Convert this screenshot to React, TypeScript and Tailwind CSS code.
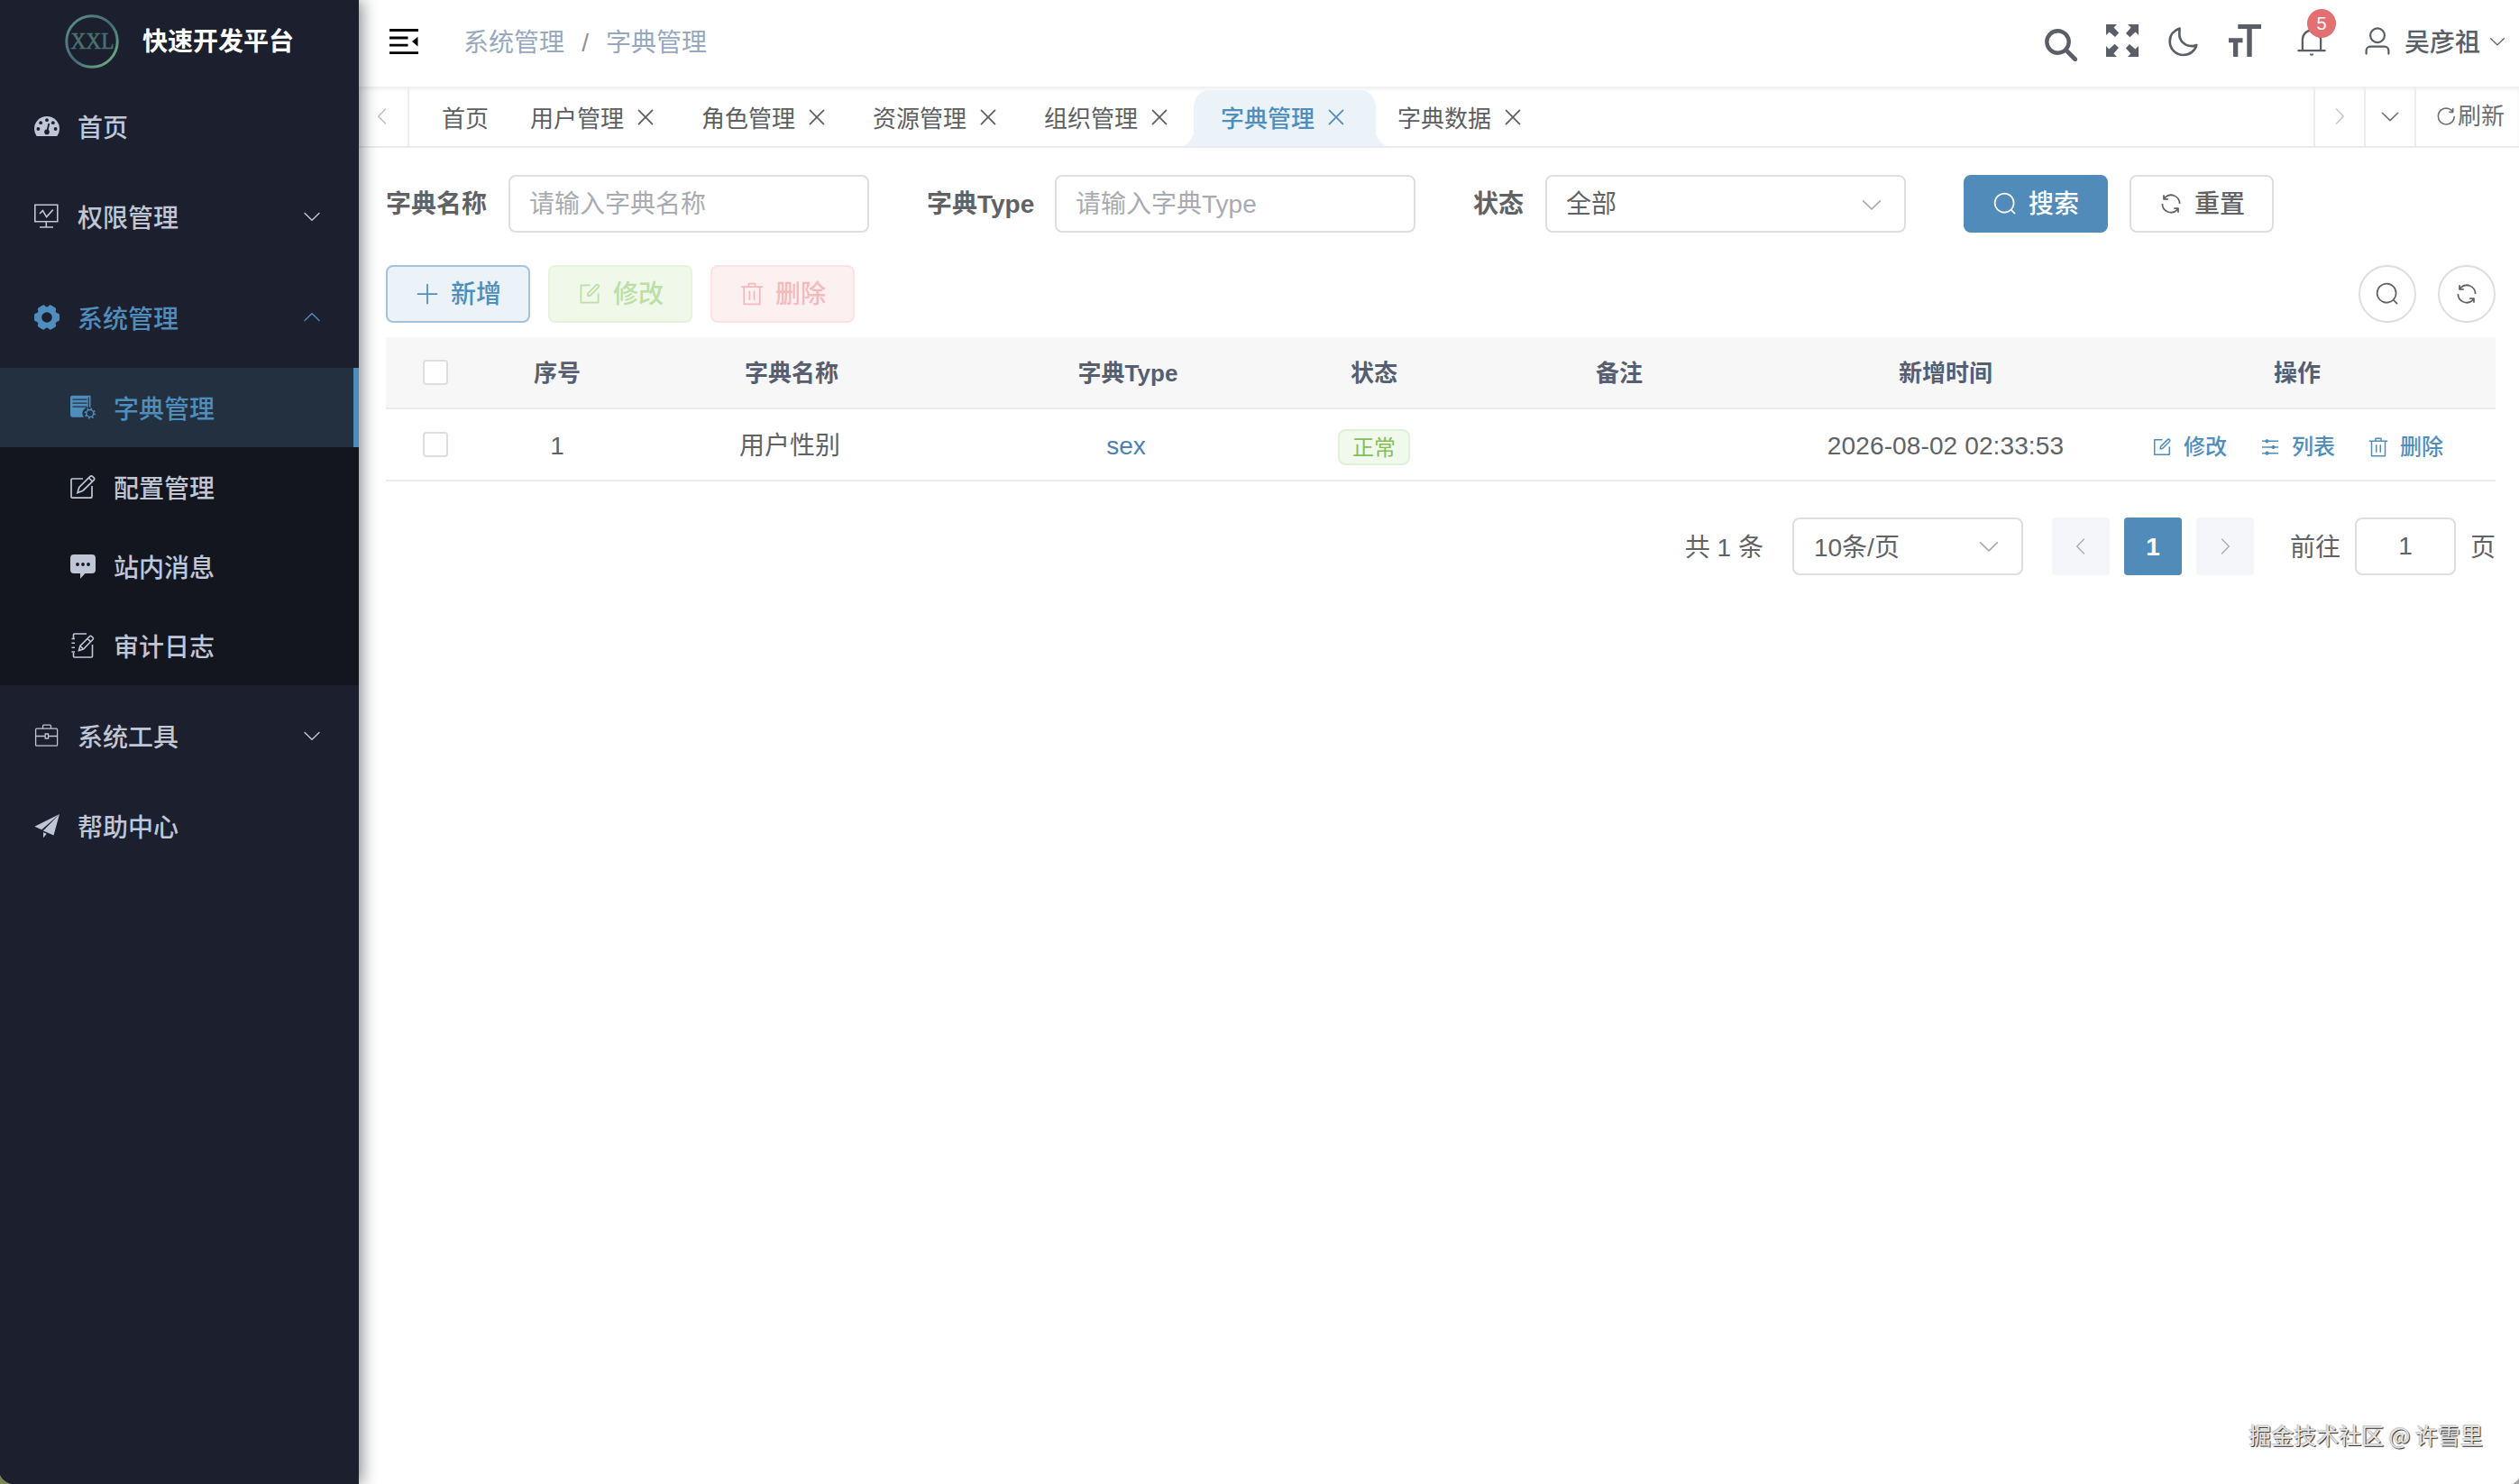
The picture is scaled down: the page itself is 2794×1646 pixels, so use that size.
import type { ReactNode } from "react";
import clsx from "clsx";

type IconProps = { className?: string };

// 1024-grid glyphs used by the buttons, inputs and arrows
const PATHS = {
  search:
    "m795.904 750.72 124.992 124.928a32 32 0 0 1-45.248 45.248L750.656 795.904a416 416 0 1 1 45.248-45.248M480 832a352 352 0 1 0 0-704 352 352 0 0 0 0 704",
  refresh:
    "M771.776 794.88A384 384 0 0 1 128 512h64a320 320 0 0 0 555.712 216.448H654.72a32 32 0 1 1 0-64h149.056a32 32 0 0 1 32 32v148.928a32 32 0 1 1-64 0v-50.56zM276.288 295.616h92.992a32 32 0 0 1 0 64H220.16a32 32 0 0 1-32-32V178.56a32 32 0 0 1 64 0v50.56A384 384 0 0 1 896.128 512h-64a320 320 0 0 0-555.776-216.384z",
  refreshRight:
    "M784.512 230.272v-50.56a32 32 0 1 1 64 0v149.056a32 32 0 0 1-32 32H667.52a32 32 0 1 1 0-64h92.992A320 320 0 1 0 524.8 833.152a320 320 0 0 0 320-320h64a384 384 0 0 1-384 384 384 384 0 0 1-384-384 384 384 0 0 1 643.712-282.88z",
  plus: "M480 480V128a32 32 0 0 1 64 0v352h352a32 32 0 1 1 0 64H544v352a32 32 0 1 1-64 0V544H128a32 32 0 0 1 0-64z",
  edit: "M832 512a32 32 0 1 1 64 0v352a32 32 0 0 1-32 32H160a32 32 0 0 1-32-32V160a32 32 0 0 1 32-32h352a32 32 0 0 1 0 64H192v640h640z m-362.048 42.24 52.8-7.552L847.104 222.4a32 32 0 1 0-45.248-45.248L477.44 501.44l-7.552 52.8zm422.4-422.4a96 96 0 0 1 0 135.808l-331.84 331.84a32 32 0 0 1-18.112 9.088L436.8 623.68a32 32 0 0 1-36.224-36.224l15.104-105.6a32 32 0 0 1 9.024-18.112l331.904-331.84a96 96 0 0 1 135.744 0z",
  trash:
    "M160 256H96a32 32 0 0 1 0-64h256V95.936a32 32 0 0 1 32-32h256a32 32 0 0 1 32 32V192h256a32 32 0 1 1 0 64h-64v672a32 32 0 0 1-32 32H192a32 32 0 0 1-32-32zm448-64v-64H416v64zM224 896h576V256H224zm192-128a32 32 0 0 1-32-32V416a32 32 0 0 1 64 0v320a32 32 0 0 1-32 32m192 0a32 32 0 0 1-32-32V416a32 32 0 0 1 64 0v320a32 32 0 0 1-32 32",
  arrow:
    "M831.872 340.864 512 652.672 192.128 340.864a30.592 30.592 0 0 0-42.752 0 29.12 29.12 0 0 0 0 41.6L489.664 714.24a32 32 0 0 0 44.672 0l340.288-331.712a29.12 29.12 0 0 0 0-41.728 30.592 30.592 0 0 0-42.752 0z",
  close:
    "M764.288 214.592 512 466.88 259.712 214.592a31.936 31.936 0 0 0-45.12 45.12L466.752 512 214.528 764.224a31.936 31.936 0 1 0 45.12 45.184L512 557.184l252.288 252.288a31.936 31.936 0 0 0 45.12-45.12L557.12 512.064l252.288-252.352a31.936 31.936 0 1 0-45.12-45.184z",
  bell: "M256 768h512V448a256 256 0 1 0-512 0zm256-640a320 320 0 0 1 320 320v384H192V448a320 320 0 0 1 320-320M96 768h832q32 0 32 32t-32 32H96q-32 0-32-32t32-32m352 128h128a64 64 0 0 1-128 0",
  user: "M512 512a192 192 0 1 0 0-384 192 192 0 0 0 0 384m0 64a256 256 0 1 1 0-512 256 256 0 0 1 0 512m320 320v-96a96 96 0 0 0-96-96H288a96 96 0 0 0-96 96v96a32 32 0 1 1-64 0v-96a160 160 0 0 1 160-160h448a160 160 0 0 1 160 160v96a32 32 0 1 1-64 0",
};

function Glyph({ name, className }: { name: keyof typeof PATHS; className?: string }) {
  return (
    <svg viewBox="0 0 1024 1024" fill="currentColor" className={clsx("shrink-0", className)}>
      <path d={PATHS[name]} />
    </svg>
  );
}

function Svg28({ children }: { children: ReactNode }) {
  return (
    <svg viewBox="0 0 28 28" fill="none" className="size-7 shrink-0">
      {children}
    </svg>
  );
}

function DashboardIcon() {
  return (
    <Svg28>
      <path d="M2.6 25A14 14 0 0 1 0 17a14 14 0 0 1 28 0 14 14 0 0 1-2.6 8z" fill="currentColor" />
      <g fill="#1c1f2d">
        <circle cx="4.4" cy="17" r="1.9" />
        <circle cx="7.2" cy="10.2" r="1.9" />
        <circle cx="14" cy="7.2" r="1.9" />
        <circle cx="20.8" cy="10.2" r="1.9" />
        <circle cx="23.6" cy="17" r="1.9" />
        <circle cx="14" cy="20.4" r="2.8" />
      </g>
      <path d="M14.3 20l2-9" stroke="#1c1f2d" strokeWidth="1.8" />
    </Svg28>
  );
}

function MonitorIcon() {
  return (
    <Svg28>
      <path d="M.8 1.2h25v18.600h-25zM13.300 20v6M6 26h15M6 11l3.400-3.400 4.200 7L20.800 6.600" stroke="currentColor" strokeWidth="1.6" />
    </Svg28>
  );
}

function GearIcon() {
  return (
    <Svg28>
      <circle cx="14" cy="14" r="8.800" stroke="currentColor" strokeWidth="6" />
      {[0, 60, 120, 180, 240, 300].map((deg) => (
        <rect
          key={deg}
          x="20"
          y="9.300"
          width="8"
          height="9.400"
          rx="2.600"
          fill="currentColor"
          transform={`rotate(${deg} 14 14)`}
        />
      ))}
    </Svg28>
  );
}

function DictIcon() {
  return (
    <Svg28>
      <path d="M2 .8H22.500V13.800A7 7 0 0 0 15 24.800H3Q0 24.800 0 21.800V3Q0 .8 2 .8z" fill="currentColor" />
      <path d="M2.500 5.200h16M2.500 9.200h16M2.500 13.200h16M20.300 2.500v12" stroke="#223040" strokeWidth="1.200" />
      <circle cx="21.800" cy="20.500" r="3.900" stroke="currentColor" strokeWidth="1.500" />
      <circle cx="21.800" cy="20.500" r="5.300" stroke="currentColor" strokeWidth="1.700" strokeDasharray="1.800 2.363" />
    </Svg28>
  );
}

function ComposeIcon() {
  return (
    <Svg28>
      <path
        d="M14 5H2.200Q1 5 1 6.200V25q0 1.200 1.200 1.200H22q2 0 2-2V13M8 20.500l1.800-6L22 2.400q1.400-1.200 2.800.2l1.400 1.400q1 1.200 0 2.400L14 18.200zM20.500 4l4 4"
        stroke="currentColor"
        strokeWidth="1.700"
      />
    </Svg28>
  );
}

function MessageIcon() {
  return (
    <Svg28>
      <path d="M4 1h20q4 0 4 4v13q0 4-4 4h-7.500L11 27.800V22H4q-4 0-4-4V5q0-4 4-4z" fill="currentColor" />
      <g fill="#14161f">
        <circle cx="8" cy="12" r="1.900" />
        <circle cx="14" cy="12" r="1.900" />
        <circle cx="20" cy="12" r="1.900" />
      </g>
    </Svg28>
  );
}

function LogIcon() {
  return (
    <Svg28>
      <path
        d="M3.500 6V2Q3.500 1 4.500 1H18M3.500 22v4q0 1 1 1H23.500q1 0 1-1V13M1.500 6.500h3.500M1.500 11.300h3.500M1.500 16.200h3.500M1.500 21h3.500M9.500 19.500l1.400-5L21.500 3.800q1-1 2 0l1.500 1.500q1 1 0 2L14.500 18zM19 6.300l3.600 3.600M10.900 14.500l3.600 3.500"
        stroke="currentColor"
        strokeWidth="1.600"
      />
    </Svg28>
  );
}

function ToolboxIcon() {
  return (
    <Svg28>
      <path
        d="M2.600 6.200h22q1 0 1 1v17q0 1-1 1h-22q-1 0-1-1v-17q0-1 1-1zM9.500 6V3.200q0-1 1-1h7q1 0 1 1V6M1.600 14.500h10.500M15.500 14.500h10M12.200 12h3.400v5h-3.400z"
        stroke="currentColor"
        strokeWidth="1.300"
      />
    </Svg28>
  );
}

function GuideIcon() {
  return (
    <Svg28>
      <path d="M28 1 .4 14.800l7.800 3.500zM28 1 9.800 19.500l2 .8L21.500 24.500zM10 21.200v6l3.800-4.500z" fill="currentColor" />
    </Svg28>
  );
}

type MenuEntry = {
  label: string;
  icon: () => ReactNode;
  height: string;
  open?: boolean;
  arrow?: boolean;
  children?: { label: string; icon: () => ReactNode; active?: boolean }[];
};

const MENU: MenuEntry[] = [
  { label: "首页", icon: DashboardIcon, height: "h-[88px]" },
  { label: "权限管理", icon: MonitorIcon, height: "h-28", arrow: true },
  {
    label: "系统管理",
    icon: GearIcon,
    height: "h-28",
    arrow: true,
    open: true,
    children: [
      { label: "字典管理", icon: DictIcon, active: true },
      { label: "配置管理", icon: ComposeIcon },
      { label: "站内消息", icon: MessageIcon },
      { label: "审计日志", icon: LogIcon },
    ],
  },
  { label: "系统工具", icon: ToolboxIcon, height: "h-28", arrow: true },
  { label: "帮助中心", icon: GuideIcon, height: "h-[88px]" },
];

const TABS = ["首页", "用户管理", "角色管理", "资源管理", "组织管理", "字典管理", "字典数据"];
const HOME_TAB = "首页";
const ACTIVE_TAB = "字典管理";

const COLUMNS = "grid grid-cols-[110px_160px_360px_384px_164px_380px_344px_438px] items-center text-center";

function Logo() {
  return (
    <svg viewBox="0 0 62 62" className="size-[62px] shrink-0">
      <defs>
        <linearGradient id="ring" x1="0" y1="0" x2="1" y2="1">
          <stop offset="0" stopColor="#5c9488" />
          <stop offset=".5" stopColor="#426a76" />
          <stop offset="1" stopColor="#76b888" />
        </linearGradient>
      </defs>
      <circle cx="31" cy="31" r="28.200" fill="none" stroke="url(#ring)" strokeWidth="3" />
      <text
        x="31.500"
        y="39"
        textAnchor="middle"
        textLength="48"
        lengthAdjust="spacingAndGlyphs"
        fontSize="25"
        fill="#4a716f"
        stroke="#4a716f"
        strokeWidth=".6"
        className="font-['Liberation_Serif',serif] font-normal"
      >
        XXL
      </text>
    </svg>
  );
}

function Sidebar() {
  return (
    <aside className="relative z-10 h-full w-[398px] shrink-0 bg-[#1c1f2d] font-['Noto_Sans_CJK_SC',sans-serif] text-[28px] font-medium text-[#bfc6d6] shadow-[4px_0_16px_rgba(0,10,20,0.45)]">
      <div className="flex h-24 items-center pb-1 pl-[71px]">
        <Logo />
        <h1 className="ml-[25px] pb-1 font-bold text-white">快速开发平台</h1>
      </div>
      <nav>
        {MENU.map((item) => (
          <div key={item.label}>
            <div className={clsx("flex items-center pr-10 pl-[38px]", item.height, item.open && "text-[#4f8dbd]")}>
              <item.icon />
              <span className="ml-5 flex-1">{item.label}</span>
              {item.arrow && <Glyph name="arrow" className={clsx("size-6", item.open && "rotate-180")} />}
            </div>
            {item.children && (
              <div className="bg-[#14161f]">
                {item.children.map((sub) => (
                  <div
                    key={sub.label}
                    className={clsx(
                      "flex h-[88px] items-center pl-[78px]",
                      sub.active && "border-r-6 border-[#508bb9] bg-[#223040] text-[#4f8dbd]"
                    )}
                  >
                    <sub.icon />
                    <span className="ml-5">{sub.label}</span>
                  </div>
                ))}
              </div>
            )}
          </div>
        ))}
      </nav>
    </aside>
  );
}

function FoldIcon({ className }: IconProps) {
  return (
    <svg viewBox="0 0 32 30" className={className} fill="#000">
      <path d="M0 1h32v2.900H0zM0 9.600h20.500v2.900H0zM0 17.700h20.500v2.900H0zM0 26.200h32v2.900H0zM31.500 9.800v10.600L25 15.100z" />
    </svg>
  );
}

function Navbar() {
  return (
    <header className="flex h-24 items-start pl-[34px] text-[28px]">
      <FoldIcon className="mt-[31px] h-[30px] w-8" />
      <div className="ml-[50px] flex h-[92px] items-center pt-[3px] text-[#97a8be]">
        <span>系统管理</span>
        <span className="mx-[18px] w-2.5 text-center text-[#8f9299]">/</span>
        <span>字典管理</span>
      </div>
      <div className="ml-auto flex text-[#5a5e66]">
        <svg viewBox="0 0 36 36" fill="none" stroke="currentColor" className="mt-8 mr-8 size-9">
          <circle cx="14.500" cy="14.500" r="12.200" strokeWidth="4.400" />
          <path d="M23.500 23.500 33.700 33.700" strokeWidth="4.800" strokeLinecap="round" />
        </svg>
        <svg viewBox="0 0 36 36" fill="currentColor" className="mt-[27px] mr-[33px] size-9">
          {[0, 90, 180, 270].map((deg) => (
            <path key={deg} d="M0 0h12L8.600 3.400 14.200 9.600 10 14 3.600 8.400 0 12z" transform={`rotate(${deg} 18 18)`} />
          ))}
        </svg>
        <svg viewBox="0 0 34 34" fill="none" className="mt-[29px] mr-[33px] size-[34px]">
          <path
            d="M12.500 2.600C6 4.500 1.700 10 1.700 17a15 15 0 0 0 15 15c7 0 13-4.500 14.600-11-1.500.8-3.500 1.100-5.500 1.100C18 22 12.300 16 12.300 9c0-2.300.2-4.500.2-6.400z"
            stroke="currentColor"
            strokeWidth="2.700"
            strokeLinejoin="round"
          />
        </svg>
        <svg viewBox="0 0 36 36" fill="currentColor" className="mt-[27px] mr-[38px] size-9">
          <path d="M10.300 0H36v5H25.700v31h-5.400V5h-10zM0 15.300h15.500v4.900h-5.200V36H5V20.200H0z" />
        </svg>
        <div className="relative mr-[37px]">
          <Glyph name="bell" className="mt-7 size-9" />
          <span className="absolute top-2.5 left-[13px] flex size-8 items-center justify-center rounded-full bg-[#e27070] text-[20px] text-white">
            5
          </span>
        </div>
        <Glyph name="user" className="mt-7 size-9" />
        <div className="ml-3 flex h-[92px] items-center">
          <span className="pt-[3px] font-medium">吴彦祖</span>
          <Glyph name="arrow" className="mr-[13px] ml-2 size-[22px]" />
        </div>
      </div>
    </header>
  );
}

function ActiveTabShape() {
  return (
    <svg viewBox="0 0 226 62" className="absolute bottom-0 -left-3 h-[62px] w-[226px]" fill="#ebf2f8">
      <path d="M0 62q8-2 12-14V18Q14 2 28 0H198q14 2 16 18V48q4 12 12 14z" />
    </svg>
  );
}

function TabsBar() {
  return (
    <div className="flex h-[68px] border-b-2 border-[#e9ebee] text-[26px] text-[#5c5e62] shadow-[inset_0_4px_5px_-1px_rgba(0,0,0,0.07)]">
      <div className="flex w-14 items-center justify-center border-r-2 border-[#ebedf0] pr-0.5 text-[#b9bbc0]">
        <Glyph name="arrow" className="size-6 rotate-90" />
      </div>
      <div className="flex flex-1 pl-3">
        {TABS.map((tab) => {
          const active = tab === ACTIVE_TAB;
          return (
            <div
              key={tab}
              className={clsx(
                "relative flex items-center pt-0.5",
                active ? "w-[202px] pl-[30px] font-medium text-[#4f8dbd]" : "pl-6",
                !active && (tab === HOME_TAB ? "pr-[22px]" : "pr-6")
              )}
            >
              {active && <ActiveTabShape />}
              <span className="relative pt-[3px]">{tab}</span>
              {tab !== HOME_TAB && <Glyph name="close" className="relative ml-2.5 size-7" />}
            </div>
          );
        })}
      </div>
      <div className="flex text-[#6b6e74]">
        <div className="flex w-14 items-center justify-center border-l-2 border-[#ebedf0] text-[#c0c2c7]">
          <Glyph name="arrow" className="size-6 -rotate-90" />
        </div>
        <div className="flex w-14 items-center justify-center border-l-2 border-[#ebedf0]">
          <Glyph name="arrow" className="size-[26px]" />
        </div>
        <div className="flex w-[116px] items-center border-l-2 border-[#ebedf0] pl-5">
          <Glyph name="refreshRight" className="size-[26px]" />
          <span>刷新</span>
        </div>
      </div>
    </div>
  );
}

function Button({ icon, label, className }: { icon: keyof typeof PATHS; label: string; className: string }) {
  return (
    <button
      className={clsx("flex h-16 w-40 items-center justify-center gap-3 rounded-lg border-2 font-medium", className)}
    >
      <Glyph name={icon} className="size-7" />
      <span className="pt-0.5">{label}</span>
    </button>
  );
}

const FIELD = "flex h-16 w-[400px] items-center rounded-lg border-2 border-[#dcdee2] pt-0.5 pr-[22px] pl-[21px]";

function SearchForm() {
  return (
    <form className="flex items-center">
      <label className="w-[136px] pt-0.5 font-bold">字典名称</label>
      <div className={clsx(FIELD, "text-[#a8abb2]")}>请输入字典名称</div>
      <label className="ml-16 w-[142px] pt-0.5 font-bold">字典Type</label>
      <div className={clsx(FIELD, "text-[#a8abb2]")}>请输入字典Type</div>
      <label className="ml-16 w-20 pt-0.5 font-bold">状态</label>
      <div className={clsx(FIELD, "justify-between")}>
        全部
        <Glyph name="arrow" className="size-7 text-[#a8abb2]" />
      </div>
      <Button icon="search" label="搜索" className="ml-16 border-[#508bb9] bg-[#508bb9] text-white" />
      <Button icon="refresh" label="重置" className="ml-6 border-[#dcdee2]" />
    </form>
  );
}

function Toolbar() {
  return (
    <div className="mt-9 flex items-center">
      <Button icon="plus" label="新增" className="border-[#a3c3dc] bg-[#ebf2f8] text-[#4f8dbd]" />
      <Button icon="edit" label="修改" className="ml-5 border-[#e5f2dc] bg-[#f0f8ea] text-[#bcdfa5]" />
      <Button icon="trash" label="删除" className="ml-5 border-[#fbe3e5] bg-[#fdf0f0] text-[#f3b9bb]" />
      <div className="ml-auto flex gap-6">
        <button className="flex size-16 items-center justify-center rounded-full border-2 border-[#dcdee2]">
          <Glyph name="search" className="size-7" />
        </button>
        <button className="flex size-16 items-center justify-center rounded-full border-2 border-[#dcdee2]">
          <Glyph name="refresh" className="size-7" />
        </button>
      </div>
    </div>
  );
}

function Checkbox() {
  return <span className="mx-auto block size-7 rounded border-2 border-[#dcdee2] bg-white" />;
}

function OperationIcon() {
  return (
    <svg viewBox="0 0 24 24" className="size-6 shrink-0" fill="none">
      <path d="M3 5.300h18M3 12h18M3 18.700h18" stroke="currentColor" strokeWidth="1.500" />
      <g fill="currentColor">
        <circle cx="8.500" cy="5.300" r="2.100" />
        <circle cx="15.500" cy="12" r="2.100" />
        <circle cx="8.500" cy="18.700" r="2.100" />
      </g>
    </svg>
  );
}

function DictTable() {
  return (
    <div className="mt-4">
      <div className={clsx(COLUMNS, "h-20 border-b-2 border-[#ebebed] bg-[#f7f7f8] text-[26px] font-bold text-[#565e70]")}>
        <Checkbox />
        <span className="pt-0.5">序号</span>
        <span className="pt-0.5">字典名称</span>
        <span className="pt-0.5 pl-0.5">字典Type</span>
        <span className="pt-0.5">状态</span>
        <span className="pt-0.5">备注</span>
        <span className="pt-0.5">新增时间</span>
        <span className="pt-0.5 pr-0.5">操作</span>
      </div>
      <div className={clsx(COLUMNS, "h-20 border-b-2 border-[#ebebed]")}>
        <Checkbox />
        <span className="pt-[3px]">1</span>
        <span className="pt-[3px] pr-1">用户性别</span>
        <span className="pt-[3px] pr-0.5 text-[#4a80b5]">sex</span>
        <span className="mx-auto mt-1.5 flex h-10 w-20 items-center justify-center rounded-lg border-2 border-[#e1f0d8] bg-[#f1f9ec] pt-0.5 text-2xl text-[#83bf56]">
          正常
        </span>
        <span />
        <span className="pt-[3px] tracking-[0.12px]">2026-08-02 02:33:53</span>
        <div className="mt-1.5 flex items-center justify-center gap-9 pr-0.5 text-2xl font-medium text-[#4f8dbd]">
          <span className="flex items-center gap-3">
            <Glyph name="edit" className="size-6" />
            修改
          </span>
          <span className="flex items-center gap-3">
            <OperationIcon />
            列表
          </span>
          <span className="flex items-center gap-3">
            <Glyph name="trash" className="size-6" />
            删除
          </span>
        </div>
      </div>
    </div>
  );
}

function Pagination() {
  return (
    <div className="mt-10 flex items-center justify-end">
      <span className="pt-[3px]">共 1 条</span>
      <div className="ml-8 flex h-16 w-64 items-center justify-between rounded-lg border-2 border-[#dcdee2] px-[22px]">
        <span className="pt-[3px]">10条/页</span>
        <Glyph name="arrow" className="size-7 text-[#a8abb2]" />
      </div>
      <div className="ml-8 flex gap-4">
        <span className="flex size-16 items-center justify-center rounded bg-[#f4f6fa] text-[#a8abb2]">
          <Glyph name="arrow" className="size-6 rotate-90" />
        </span>
        <span className="flex size-16 items-center justify-center rounded bg-[#508bb9] pt-0.5 font-bold text-white">
          1
        </span>
        <span className="flex size-16 items-center justify-center rounded bg-[#f4f6fa] text-[#a8abb2]">
          <Glyph name="arrow" className="size-6 -rotate-90" />
        </span>
      </div>
      <span className="ml-10 pt-[3px]">前往</span>
      <span className="mx-4 flex h-16 w-28 items-center justify-center rounded-lg border-2 border-[#dcdee2]">1</span>
      <span className="pt-[3px]">页</span>
    </div>
  );
}

export default function App() {
  return (
    <div className="relative flex h-[1646px] w-[2794px] overflow-hidden bg-white font-['Liberation_Sans','Noto_Sans_CJK_SC',sans-serif] text-[28px] leading-none text-[#606266]">
      <Sidebar />
      <div className="flex min-w-0 flex-1 flex-col">
        <Navbar />
        <TabsBar />
        <main className="pt-[30px] pr-[26px] pl-[30px]">
          <SearchForm />
          <Toolbar />
          <DictTable />
          <Pagination />
        </main>
      </div>

      {/* Watermark */}
      <div className="absolute right-10 bottom-[42px] font-['Noto_Sans_CJK_SC',sans-serif] text-[25px] text-[#e4e4e4] [text-shadow:1px_1px_1px_#222,-1px_-1px_1px_#c4c4c4]">
        掘金技术社区 @ 许雪里
      </div>

      {/* Rounded window corners */}
      <svg viewBox="0 0 12 10" className="absolute bottom-0 left-0 z-20 h-2.5 w-3" fill="#7c8458">
        <path d="M0 0q3 7 12 10H0z" />
      </svg>
      <svg viewBox="0 0 8 7" className="absolute right-0 bottom-0 h-[7px] w-2" fill="#a5a5a5">
        <path d="M8 0Q6 5 0 7h8z" />
      </svg>
    </div>
  );
}
